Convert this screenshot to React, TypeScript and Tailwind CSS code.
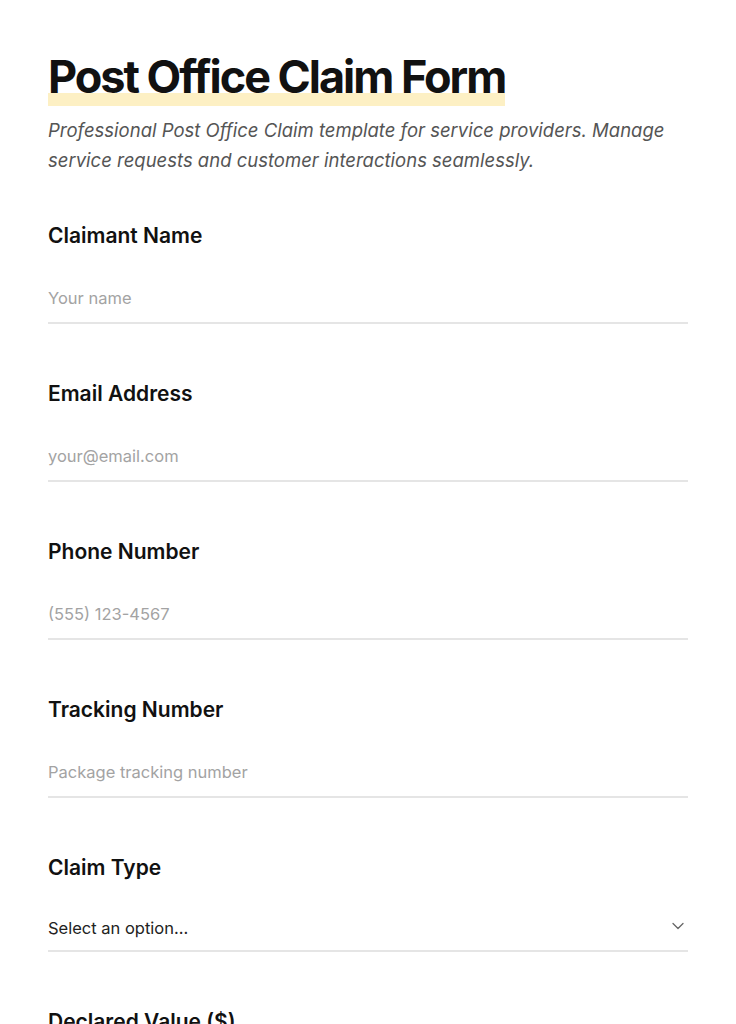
import React from "react";

const fields = [
  { label: "Claimant Name", placeholder: "Your name", type: "text" },
  { label: "Email Address", placeholder: "your@email.com", type: "email" },
  { label: "Phone Number", placeholder: "(555) 123-4567", type: "tel" },
  { label: "Tracking Number", placeholder: "Package tracking number", type: "text" },
];

export default function App() {
  return (
    <div className="min-h-screen bg-white font-['Inter',sans-serif] text-[#111111]">
      <div className="px-12 pt-[54px] pb-16">
        <h1 className="inline-block pb-[7px] text-[45px] font-bold leading-none tracking-[-0.045em] bg-[linear-gradient(to_top,#fdf0c4_0,#fdf0c4_13px,transparent_13px)]">
          Post Office Claim Form
        </h1>
        <p className="mt-[9px] text-[18.5px] italic leading-[30px] text-[#555555]">
          Professional Post Office Claim template for service providers. Manage service requests and customer interactions seamlessly.
        </p>

        <form className="mt-[47px] flex flex-col gap-[56px]">
          {fields.map((f) => (
            <div key={f.label} className="flex flex-col gap-6">
              <label className="text-[21px] font-semibold leading-[28px] text-[#111111]">
                {f.label}
              </label>
              <input
                type={f.type}
                placeholder={f.placeholder}
                className="h-[50px] w-full border-b-2 border-[#e5e5e5] bg-transparent py-3 text-[16.5px] leading-6 text-[#222222] outline-none placeholder:text-[#a3a3a3]"
              />
            </div>
          ))}
          <div className="flex flex-col gap-6">
            <label className="text-[21px] font-semibold leading-[28px] text-[#111111]">
              Claim Type
            </label>
            <div className="relative -mt-[1px]">
              <select className="h-[47px] w-full appearance-none border-b-2 border-[#e5e5e5] bg-transparent py-[10px] text-[16.5px] leading-6 text-[#222222] outline-none">
                <option>Select an option...</option>
                <option>Lost Package</option>
                <option>Damaged Package</option>
                <option>Delayed Delivery</option>
              </select>
              <svg
                className="pointer-events-none absolute right-[4px] top-[17px]"
                width="12"
                height="8"
                viewBox="0 0 12 8"
                fill="none"
              >
                <path d="M1 1.5L6 6.5L11 1.5" stroke="#666666" strokeWidth="1.3" strokeLinecap="round" strokeLinejoin="round" />
              </svg>
            </div>
          </div>
          <div className="flex flex-col gap-6">
            <label className="text-[21px] font-semibold leading-[28px] text-[#111111]">
              Declared Value ($)
            </label>
            <input
              type="text"
              placeholder="0.00"
              className="h-[50px] w-full border-b-2 border-[#e5e5e5] bg-transparent py-3 text-[16.5px] leading-6 text-[#222222] outline-none placeholder:text-[#a3a3a3]"
            />
          </div>
        </form>
      </div>
    </div>
  );
}
